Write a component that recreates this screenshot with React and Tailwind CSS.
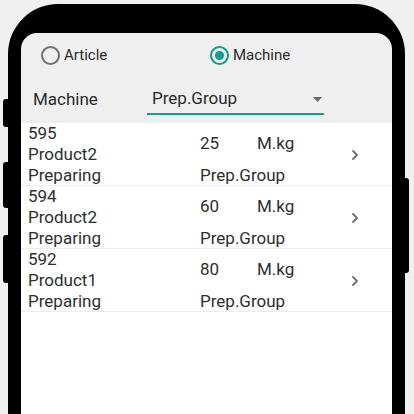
import React from 'react';

const rows = [
  { id: '595', product: 'Product2', qty: '25' },
  { id: '594', product: 'Product2', qty: '60' },
  { id: '592', product: 'Product1', qty: '80' },
];

const Chevron = () => (
  <svg width="10" height="12" viewBox="0 0 10 12" fill="none">
    <path d="M3 2l4 4-4 4" stroke="#6e6e6e" strokeWidth="1.8" strokeLinecap="round" strokeLinejoin="round" />
  </svg>
);

const App = () => {
  return (
    <div className="h-[414px] w-[414px] overflow-hidden bg-[#f0f0f0] pt-[4px] pl-[8px]" style={{ fontFamily: 'Roboto, "Noto Sans", sans-serif' }}>
      <div className="relative w-[397px] h-[420px]">
        {/* side buttons */}
        <div className="absolute left-[-5px] top-[95px] w-[8px] h-[28px] rounded-l-[3px] bg-black" />
        <div className="absolute left-[-5px] top-[158px] w-[8px] h-[46px] rounded-l-[3px] bg-black" />
        <div className="absolute left-[-5px] top-[231px] w-[8px] h-[48px] rounded-l-[3px] bg-black" />
        <div className="absolute right-[-4px] top-[174px] w-[8px] h-[95px] rounded-r-[3px] bg-black" />

        <div className="relative h-full rounded-t-[50px] bg-black pt-[29px] px-[13px]">
          <div className="h-full rounded-t-[16px] bg-[#efefef] overflow-hidden flex flex-col">
            {/* radio row */}
            <div className="h-[44px] flex items-center pl-[20px] text-[15px] text-[#2b2b2b]">
              <div className="w-[169px] flex items-center gap-[4px]">
                <span className="w-[19px] h-[19px] rounded-full border-2 border-[#707070]" />
                <span>Article</span>
              </div>
              <div className="flex items-center gap-[4px]">
                <span className="w-[19px] h-[19px] rounded-full border-2 border-[#139b8c] flex items-center justify-center">
                  <span className="w-[9px] h-[9px] rounded-full bg-[#139b8c]" />
                </span>
                <span>Machine</span>
              </div>
            </div>

            {/* machine selector */}
            <div className="h-[46px] flex items-center pl-[12px] text-[17px] text-[#2b2b2b]">
              <span className="w-[114px]">Machine</span>
              <div className="relative w-[177px] h-[30px] flex items-center pl-[5px] border-b-2 border-[#1a9a8c]">
                <span>Prep.Group</span>
                <svg className="absolute right-[2px] top-[12px]" width="9" height="5" viewBox="0 0 9 5">
                  <path d="M0 0h9L4.5 5z" fill="#6a6a6a" />
                </svg>
              </div>
            </div>

            {/* list */}
            <div className="flex-1 bg-white">
              {rows.map((r) => (
                <div key={r.id} className="h-[63px] flex items-center border-b border-[#ececec] text-[17px] leading-[21px] text-[#2e2e2e]">
                  <div className="w-[179px] pl-[7px] flex flex-col">
                    <span>{r.id}</span>
                    <span>{r.product}</span>
                    <span>Preparing</span>
                  </div>
                  <div className="w-[140px] flex flex-col">
                    <div className="h-[42px] flex items-center">
                      <span className="w-[57px]">{r.qty}</span>
                      <span>M.kg</span>
                    </div>
                    <span>Prep.Group</span>
                  </div>
                  <div className="w-[20px] ml-[5px] flex justify-center pt-[1px]">
                    <Chevron />
                  </div>
                </div>
              ))}
            </div>
          </div>
        </div>
      </div>
    </div>
  );
};

export default App;
